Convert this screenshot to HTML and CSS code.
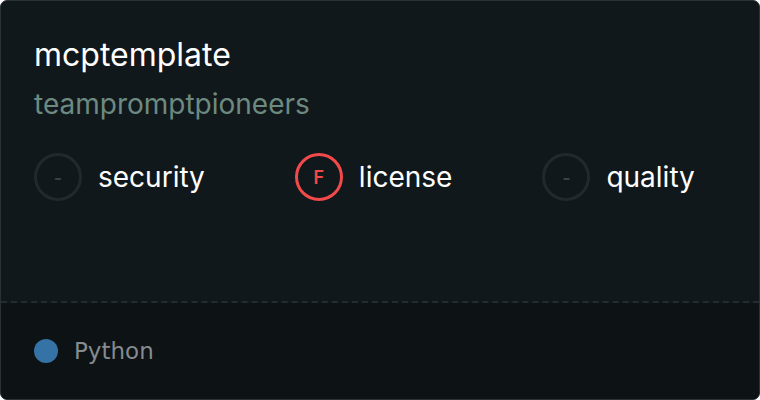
FILE: index.html
```html
<!DOCTYPE html>
<html lang="en">
<head>
  <meta charset="UTF-8">
  <meta name="viewport" content="width=device-width, initial-scale=1">
  <title>mcptemplate</title>
  <link rel="stylesheet" href="styles.css">
</head>
<body>
  <div class="card">
    <div class="card-main">
      <h1 class="repo-name">mcptemplate</h1>
      <div class="repo-owner">teampromptpioneers</div>

      <div class="scores">
        <div class="score">
          <span class="grade empty">-</span>
          <span class="score-label">security</span>
        </div>
        <div class="score">
          <span class="grade fail">F</span>
          <span class="score-label">license</span>
        </div>
        <div class="score">
          <span class="grade empty">-</span>
          <span class="score-label">quality</span>
        </div>
      </div>
    </div>

    <div class="card-footer">
      <span class="lang-dot"></span>
      <span class="lang-name">Python</span>
    </div>
  </div>
</body>
</html>
```

FILE: styles.css
```css
html, body {
  margin: 0;
  padding: 0;
  background: #ffffff;
}
body {
  font-family: Inter, "Noto Sans", sans-serif;
}
.card {
  width: 760px;
  height: 400px;
  box-sizing: border-box;
  border: 1px solid #2a3236;
  border-radius: 7px;
  background: #11181b;
  overflow: hidden;
  display: flex;
  flex-direction: column;
}
.card-main {
  flex: 1;
  padding: 34px 33px 0;
  border-bottom: 2px dashed #242c30;
}
.repo-name {
  margin: 0;
  font-size: 32px;
  font-weight: 400;
  color: #ffffff;
  line-height: 40px;
}
.repo-owner {
  margin-top: 12px;
  font-size: 28px;
  color: #6d8a80;
  line-height: 34px;
}
.scores {
  display: flex;
  gap: 90px;
  margin-top: 32px;
}
.score {
  display: flex;
  align-items: center;
  gap: 16px;
}
.grade {
  width: 48px;
  height: 48px;
  box-sizing: border-box;
  border-radius: 50%;
  border: 3px solid #22292d;
  display: flex;
  align-items: center;
  justify-content: center;
  font-size: 18px;
  font-weight: 600;
  color: #3a4246;
}
.grade.fail {
  border-color: #f24a4a;
  color: #f24a4a;
}
.score-label {
  font-size: 28px;
  color: #ffffff;
}
.card-footer {
  height: 96px;
  background: #0d1215;
  display: flex;
  align-items: center;
  padding: 0 33px;
  gap: 16px;
}
.lang-dot {
  width: 24px;
  height: 24px;
  border-radius: 50%;
  background: #3572a5;
}
.lang-name {
  font-family: "DejaVu Sans", sans-serif;
  font-size: 23px;
  color: #858b8f;
}
```
